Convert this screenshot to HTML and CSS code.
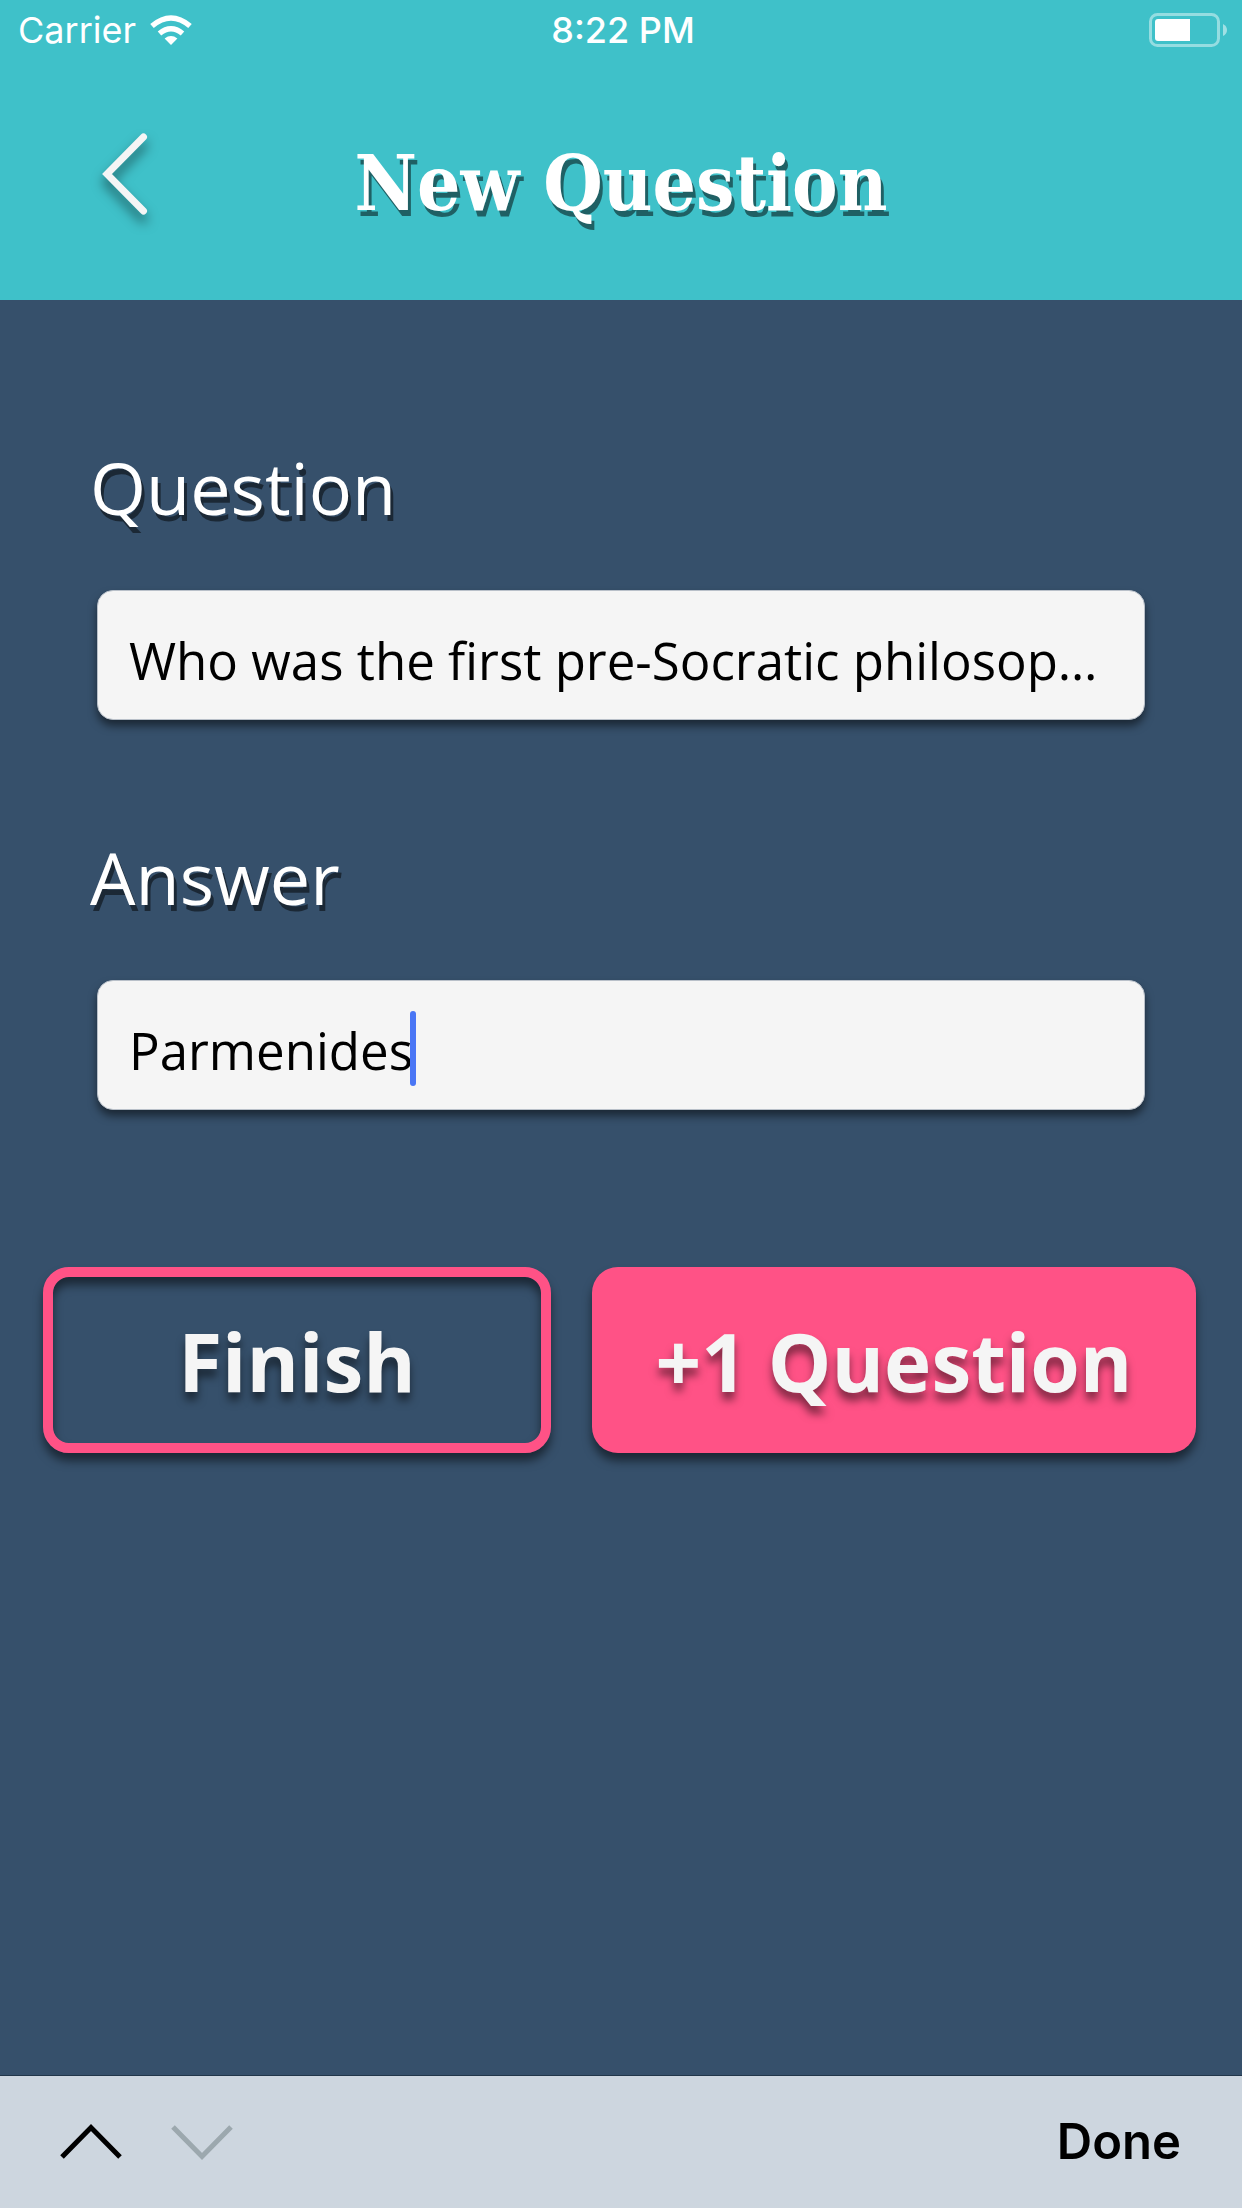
FILE: index.html
```html
<!DOCTYPE html>
<html lang="en">
<head>
<meta charset="utf-8">
<meta name="viewport" content="width=device-width, initial-scale=1">
<title>New Question</title>
<link rel="stylesheet" href="styles.css">
</head>
<body>
<div class="screen">
  <header class="header">
    <div class="status">
      <div class="status-left">
        <span>Carrier</span>
        <svg class="wifi" width="42" height="30" viewBox="0 0 42 30" aria-hidden="true">
          <path d="M21 30 L14.600 23.400 Q21 18.600 27.400 23.400 Z" fill="#fff"/>
          <path d="M9.500 18.500 Q21 9 32.500 18.500" fill="none" stroke="#fff" stroke-width="5.500"/>
          <path d="M2 11 Q21 -5 40 11" fill="none" stroke="#fff" stroke-width="5.500"/>
        </svg>
      </div>
      <span class="time">8:22 PM</span>
      <svg class="battery" width="79" height="34" viewBox="0 0 79 34" aria-hidden="true">
        <rect x="1.500" y="1.500" width="68" height="31" rx="7" fill="none" stroke="#fff" stroke-opacity=".45" stroke-width="3"/>
        <path d="M9 6 H41 V28 H9 Q6 28 6 25 V9 Q6 6 9 6Z" fill="#fff"/>
        <path d="M74 11 Q78 13 78 17 Q78 21 74 23Z" fill="#fff" fill-opacity=".5"/>
      </svg>
    </div>
    <div class="nav">
      <button class="back" type="button" aria-label="Back">
        <svg width="46" height="84" viewBox="0 0 46 84" aria-hidden="true">
          <path d="M41.500 5 L5 42 L41.500 79" fill="none" stroke="#f5f5f5" stroke-width="7" stroke-linecap="round"/>
        </svg>
      </button>
      <h1 class="title">New Question</h1>
    </div>
  </header>

  <form class="form">
    <div class="field">
      <label class="label" for="question">Question</label>
      <div class="box">
        <input class="input" id="question" type="text" value="Who was the first pre-Socratic philosopher?">
      </div>
    </div>
    <div class="field">
      <label class="label" for="answer">Answer</label>
      <div class="box">
        <input class="input" id="answer" type="text" value="Parmenides">
        <span class="caret"></span>
      </div>
    </div>
    <div class="actions">
      <button class="btn btn-outline" type="submit">Finish</button>
      <button class="btn btn-solid" type="button">+1 Question</button>
    </div>
  </form>

  <footer class="toolbar">
    <div class="steps">
      <button class="step" type="button" aria-label="Previous field">
        <svg width="64" height="36" viewBox="0 0 64 36" aria-hidden="true">
          <path d="M3 33 L32 3.500 L61 33" fill="none" stroke="#000" stroke-width="5"/>
        </svg>
      </button>
      <button class="step" type="button" aria-label="Next field" disabled>
        <svg width="64" height="36" viewBox="0 0 64 36" aria-hidden="true">
          <path d="M3 3 L32 32.500 L61 3" fill="none" stroke="#9ca8ae" stroke-width="5"/>
        </svg>
      </button>
    </div>
    <button class="done" type="button">Done</button>
  </footer>
</div>
</body>
</html>
```
FILE: styles.css
```css
* { box-sizing: border-box; }

body {
  margin: 0;
  background: #36506b;
  font-family: "Open Sans", "Noto Sans", sans-serif;
}

button {
  margin: 0;
  padding: 0;
  border: 0;
  background: none;
  font-family: inherit;
}

svg { display: block; overflow: visible; }

.screen {
  display: flex;
  flex-direction: column;
  min-height: 100vh;
}

.header {
  height: 300px;
  background: #3fc1c9;
  color: #fff;
}

.status {
  display: grid;
  grid-template-columns: 1fr auto 1fr;
  align-items: center;
  height: 60px;
  padding: 0 14px 0 18px;
  font: 400 36px/60px "Inter", "Liberation Sans", sans-serif;
}

.status-left {
  display: flex;
  align-items: center;
  gap: 14px;
}

.time { font-weight: 500; }
.battery { justify-self: end; }

.nav {
  display: grid;
  grid-template-columns: 1fr auto 1fr;
  align-items: center;
  height: 228px;
  padding: 0 102px;
}

.back { justify-self: start; }
.back svg { filter: drop-shadow(0 8px 6px rgba(0, 0, 0, .5)); }

.title {
  margin: 20px 0 0;
  font: 700 76px/96px "Roboto Slab", "DejaVu Serif Condensed", "DejaVu Serif", serif;
  text-shadow: 3px 6px 0 rgba(0, 0, 0, .5);
  white-space: nowrap;
}

.form {
  flex: 1;
  padding: 140px 43px 0;
}

.field {
  height: 390px;
  padding: 0 54px;
}

.label {
  display: block;
  height: 150px;
  margin-left: -7px;
  color: #fff;
  font-size: 72px;
  line-height: 94px;
  text-shadow: 3px 6px 0 rgba(0, 0, 0, .5);
}

.box { position: relative; }

.input {
  display: block;
  width: 100%;
  height: 130px;
  padding: 9px 31px 0;
  border: 1px solid #b9c0c9;
  border-radius: 16px;
  background: #f5f5f5;
  box-shadow: 0 6px 9px rgba(0, 0, 0, .5);
  color: #000;
  font: 400 51px/72px "Open Sans", "Noto Sans", sans-serif;
  text-overflow: ellipsis;
  outline: 0;
}

.caret {
  position: absolute;
  left: 313px;
  top: 31px;
  width: 6px;
  height: 75px;
  border-radius: 3px;
  background: #4a76f5;
}

.actions {
  display: grid;
  grid-template-columns: 508fr 604fr;
  gap: 41px;
  padding: 47px 3px 0 0;
}

.btn {
  height: 186px;
  border-radius: 26px;
  color: #f5f5f5;
  font-size: 80px;
  font-weight: 700;
  text-shadow: 0 8px 9px rgba(0, 0, 0, .5);
}

.btn-outline {
  border: 10px solid #ff5286;
  box-shadow: 0 8px 10px rgba(0, 0, 0, .5), inset 0 8px 10px rgba(0, 0, 0, .5);
}

.btn-solid {
  background: #ff5286;
  box-shadow: 0 8px 10px rgba(0, 0, 0, .5);
}

.toolbar {
  display: flex;
  align-items: center;
  justify-content: space-between;
  height: 133px;
  padding: 0 61px 0 59px;
  border-top: 1px solid #22364a;
  background: #cdd6df;
}

.steps { display: flex; gap: 47px; }

.done {
  color: #000;
  font: 600 49px/60px "Inter", "Liberation Sans", sans-serif;
}
```
